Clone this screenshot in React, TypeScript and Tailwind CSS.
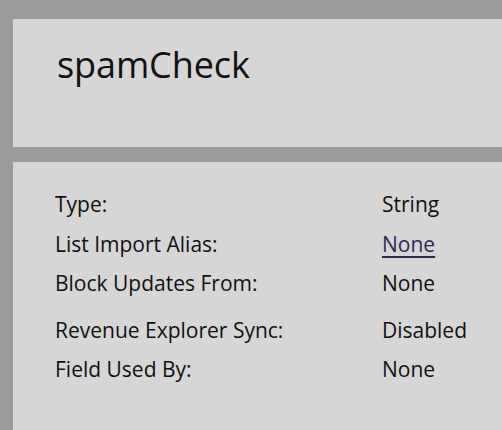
import React from 'react';

const rows: { label: string; value: string; link?: boolean; gap?: boolean }[] = [
  { label: 'Type:', value: 'String' },
  { label: 'List Import Alias:', value: 'None', link: true },
  { label: 'Block Updates From:', value: 'None' },
  { label: 'Revenue Explorer Sync:', value: 'Disabled', gap: true },
  { label: 'Field Used By:', value: 'None' },
];

export default function App() {
  return (
    <div
      className="w-[502px] h-[430px] overflow-hidden bg-[#9b9b9c] pt-[19px] pl-[13px] flex flex-col gap-[15px] text-[#111]"
      style={{ fontFamily: '"Open Sans", sans-serif' }}
    >
      <div className="h-[128px] bg-[#d6d6d6] pl-[44px] pt-[28px] shrink-0">
        <h1 className="text-[36px] leading-none tracking-[-0.1px]">spamCheck</h1>
      </div>
      <div className="flex-1 bg-[#d6d6d6] pl-[42px] pt-[23px]">
        {rows.map((r) => (
          <div
            key={r.label}
            className={`flex h-[39.5px] items-center text-[21px] ${r.gap ? 'mt-[7px]' : ''}`}
          >
            <span className="w-[327px] shrink-0">{r.label}</span>
            {r.link ? (
              <a
                href="#"
                className="text-[#2b2b4f] underline decoration-[1.5px] underline-offset-[4px]"
              >
                {r.value}
              </a>
            ) : (
              <span>{r.value}</span>
            )}
          </div>
        ))}
      </div>
    </div>
  );
}
